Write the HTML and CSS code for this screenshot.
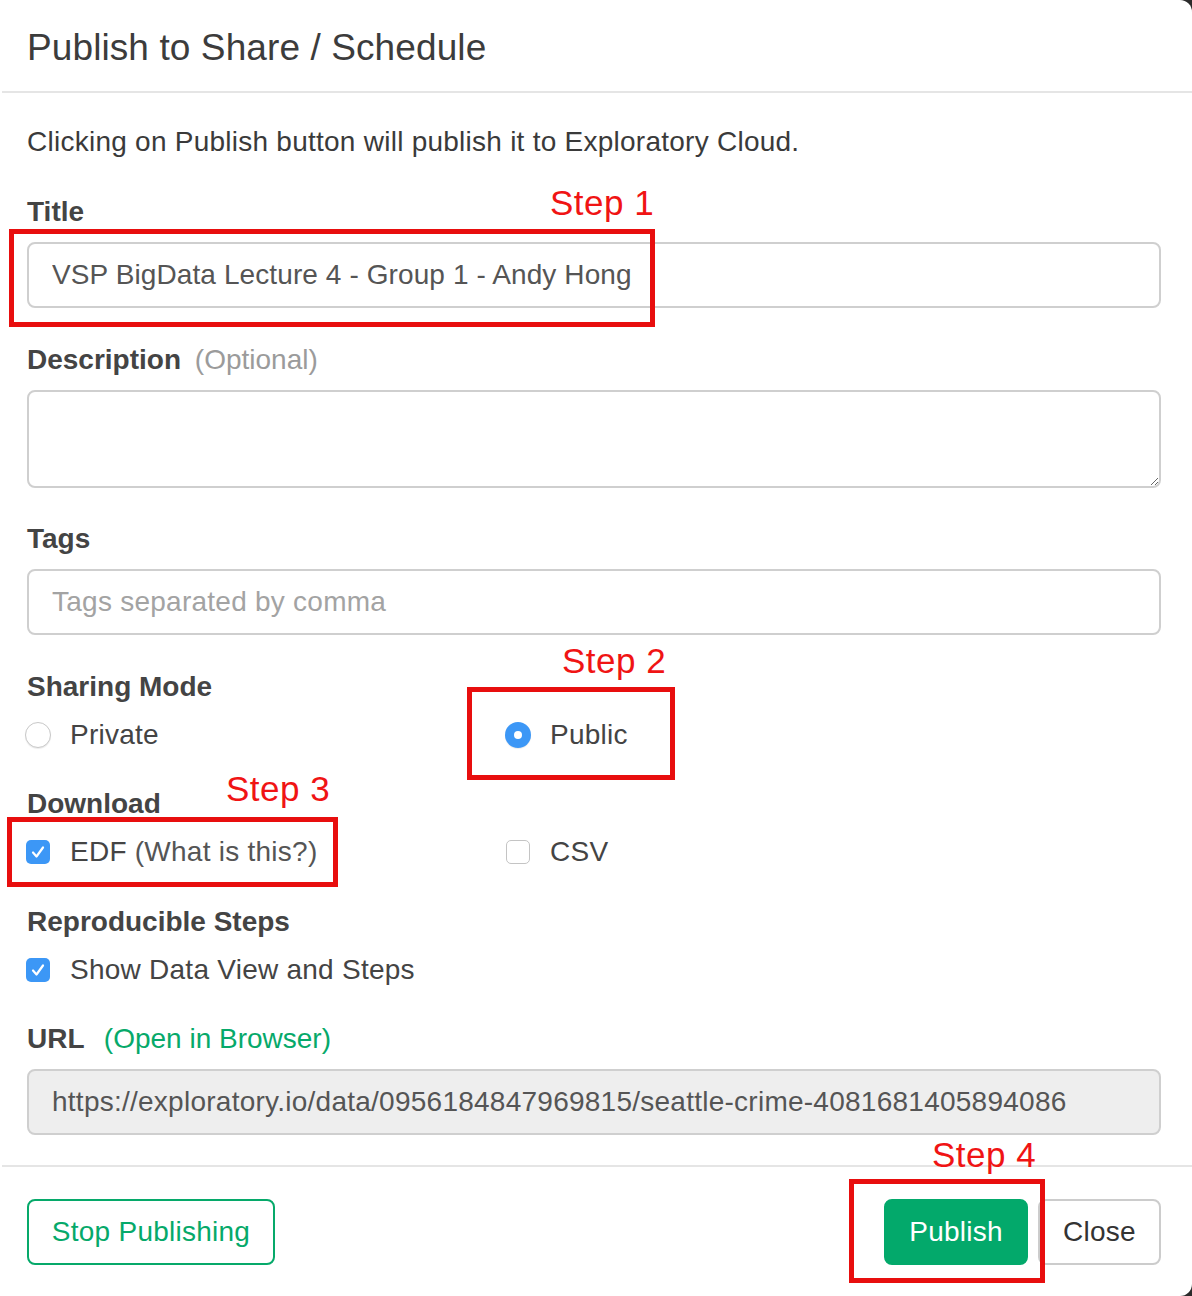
FILE: index.html
```html
<!DOCTYPE html>
<html lang="en">
<head>
<meta charset="utf-8">
<title>Publish to Share / Schedule</title>
<link rel="stylesheet" href="styles.css">
</head>
<body>
<div class="modal">
  <div class="modal-header">
    <h1 class="modal-title">Publish to Share / Schedule</h1>
  </div>
  <div class="modal-body">
    <p class="intro">Clicking on Publish button will publish it to Exploratory Cloud.</p>

    <div class="group">
      <label class="lbl">Title</label>
      <input class="field title-field" type="text" value="VSP BigData Lecture 4 - Group 1 - Andy Hong">
    </div>

    <div class="group">
      <label class="lbl">Description <span class="optional">(Optional)</span></label>
      <textarea class="field area"></textarea>
    </div>

    <div class="group">
      <label class="lbl">Tags</label>
      <input class="field" type="text" placeholder="Tags separated by comma">
    </div>

    <div class="group">
      <label class="lbl">Sharing Mode</label>
      <div class="options">
        <div class="opt"><span class="radio"></span><span>Private</span></div>
        <div class="opt"><span class="radio on"></span><span>Public</span></div>
      </div>
    </div>

    <div class="group">
      <label class="lbl">Download</label>
      <div class="options">
        <div class="opt"><span class="check on"><svg viewBox="0 0 24 24" width="24" height="24"><path d="M7 12.5 L10.5 16.5 L17 7.5" fill="none" stroke="#fff" stroke-width="2.2" stroke-linecap="round" stroke-linejoin="round"/></svg></span><span>EDF <span class="hint">(What is this?)</span></span></div>
        <div class="opt"><span class="check"></span><span>CSV</span></div>
      </div>
    </div>

    <div class="group">
      <label class="lbl">Reproducible Steps</label>
      <div class="options">
        <div class="opt"><span class="check on"><svg viewBox="0 0 24 24" width="24" height="24"><path d="M7 12.5 L10.5 16.5 L17 7.5" fill="none" stroke="#fff" stroke-width="2.2" stroke-linecap="round" stroke-linejoin="round"/></svg></span><span>Show Data View and Steps</span></div>
      </div>
    </div>

    <div class="group last">
      <label class="lbl">URL <a class="open-link">(Open in Browser)</a></label>
      <input class="field readonly" type="text" readonly value="https://exploratory.io/data/0956184847969815/seattle-crime-4081681405894086">
    </div>
  </div>
  <div class="modal-footer">
    <button class="btn btn-outline">Stop Publishing</button>
    <div class="right-btns">
      <button class="btn btn-primary">Publish</button>
      <button class="btn btn-default">Close</button>
    </div>
  </div>

  <div class="step step1">Step 1</div>
  <div class="mark mark1"></div>
  <div class="step step2">Step 2</div>
  <div class="mark mark2"></div>
  <div class="step step3">Step 3</div>
  <div class="mark mark3"></div>
  <div class="step step4">Step 4</div>
  <div class="mark mark4"></div>
</div>
</body>
</html>
```

FILE: styles.css
```css
* { box-sizing: border-box; }

html, body {
  margin: 0;
  padding: 0;
  background: #2b2b2b;
}

body {
  font-family: "Liberation Sans", Arial, Helvetica, sans-serif;
  font-size: 28px;
  color: #404040;
}

.modal {
  position: relative;
  width: 1192px;
  height: 1296px;
  background: #fff;
  border-radius: 0 12px 12px 0;
  overflow: hidden;
}

.modal-header {
  height: 93px;
  padding: 30px 0 0 27px;
  border-bottom: 2px solid #e5e5e5;
  margin-left: 2px;
}

.modal-title {
  margin: 0 0 0 -2px;
  font-size: 37px;
  line-height: 36px;
  font-weight: normal;
  letter-spacing: 0.1px;
  color: #3c3c3c;
}

.modal-body {
  padding: 31px 31px 30px 27px;
}

.intro {
  margin: 0 0 34px;
  line-height: 36px;
  color: #3a3a3a;
  letter-spacing: 0.25px;
}

.group {
  margin-bottom: 33.5px;
}

.group.last {
  margin-bottom: 0;
}

.lbl {
  display: block;
  line-height: 36px;
  margin-bottom: 12px;
  font-weight: bold;
  color: #444;
}

.optional {
  font-weight: normal;
  color: #9b9b9b;
  margin-left: 6px;
}

.open-link {
  font-weight: normal;
  color: #06a96a;
  margin-left: 12px;
}

.field {
  display: block;
  width: 100%;
  height: 66px;
  margin: 0;
  padding: 0 23px;
  border: 2px solid #cfcfcf;
  border-radius: 8px;
  background: #fff;
  font-family: "Liberation Sans", Arial, Helvetica, sans-serif;
  font-size: 28px;
  letter-spacing: 0.25px;
  color: #555;
  outline: none;
}

.field.title-field {
  letter-spacing: 0.1px;
}

.field::placeholder {
  color: #a3a3a3;
}

.field.area {
  height: 98px;
  resize: vertical;
  padding: 12px 23px;
}

.field.readonly {
  background: #eeeeee;
  color: #555;
}

.options {
  display: grid;
  grid-template-columns: 480px 1fr;
  height: 36px;
}

.opt {
  display: flex;
  align-items: center;
  gap: 19px;
  line-height: 36px;
  color: #444;
  letter-spacing: 0.25px;
}

.hint {
  color: #555;
}

.radio {
  width: 26px;
  height: 26px;
  margin-left: -2px;
  border-radius: 50%;
  border: 1.5px solid #c8c8c8;
  background: #fff;
  box-shadow: 0 1px 1px rgba(0,0,0,0.08);
  flex: none;
  position: relative;
}

.radio.on {
  border: none;
  background: #3c97f6;
}

.radio.on::after {
  content: "";
  position: absolute;
  left: 9px;
  top: 9px;
  width: 8px;
  height: 8px;
  border-radius: 50%;
  background: #fff;
}

.check {
  width: 24px;
  height: 24px;
  margin-left: -1px;
  margin-right: 1px;
  border-radius: 5px;
  border: 1.5px solid #c4c4c4;
  background: #fff;
  flex: none;
  display: block;
}

.check.on {
  border: none;
  background: #3c97f6;
}

.check svg {
  display: block;
}

.modal-footer {
  border-top: 2px solid #e5e5e5;
  margin-left: 2px;
  padding: 32px 31px 0 25px;
  display: flex;
  justify-content: space-between;
}

.right-btns {
  display: flex;
  gap: 10px;
}

.btn {
  height: 66px;
  border-radius: 8px;
  font-family: "Liberation Sans", Arial, Helvetica, sans-serif;
  font-size: 28px;
  letter-spacing: 0.25px;
  padding: 0;
  background: #fff;
  cursor: pointer;
}

.btn-outline {
  width: 248px;
  border: 2px solid #06a96a;
  color: #06a96a;
}

.btn-primary {
  width: 144px;
  border: 2px solid #03a96b;
  background: #03a96b;
  color: #fff;
}

.btn-default {
  width: 123px;
  border: 2px solid #cccccc;
  color: #333;
}

/* annotations */
.step {
  position: absolute;
  font-size: 35px;
  line-height: 40px;
  color: #f01414;
  letter-spacing: 0.5px;
  white-space: nowrap;
}

.mark {
  position: absolute;
  border: 5px solid #e80e0e;
}

.step1 { left: 550px; top: 183px; }
.mark1 { left: 9px; top: 229px; width: 646px; height: 98px; }

.step2 { left: 562px; top: 641px; }
.mark2 { left: 467px; top: 687px; width: 208px; height: 93px; }

.step3 { left: 226px; top: 769px; }
.mark3 { left: 7px; top: 817px; width: 331px; height: 70px; }

.step4 { left: 932px; top: 1135px; }
.mark4 { left: 849px; top: 1179px; width: 196px; height: 104px; }
```
